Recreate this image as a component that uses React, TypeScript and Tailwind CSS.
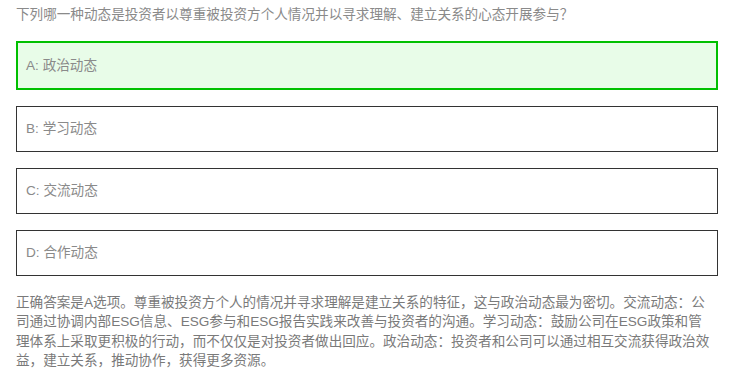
const options = [
  { key: "A", text: "政治动态", correct: true },
  { key: "B", text: "学习动态", correct: false },
  { key: "C", text: "交流动态", correct: false },
  { key: "D", text: "合作动态", correct: false },
];

const font = "font-['Liberation_Sans','Noto_Sans_CJK_SC',sans-serif]";

function Option({ label, text, correct }: { label: string; text: string; correct: boolean }) {
  return (
    <div
      className={
        correct
          ? "flex h-[49px] items-center border-2 border-[#00c000] bg-[#e8fce8] pl-[8px]"
          : "flex h-[46px] items-center border border-[#333333] bg-white pl-[9px]"
      }
    >
      <p className="text-[13.6px] leading-[20px] text-[#8a8a8a]">
        {label}: {text}
      </p>
    </div>
  );
}

export default function App() {
  return (
    <div className={`${font} h-[376px] w-[729px] bg-white pl-4 pr-[11px] pt-[5px]`}>
      <p className="text-[13.6px] leading-[19.5px] text-[#8a8a8a]">
        下列哪一种动态是投资者以尊重被投资方个人情况并以寻求理解、建立关系的心态开展参与？
      </p>
      <div className="mt-[16.5px] flex flex-col gap-[16px]">
        {options.map((o) => (
          <Option key={o.key} label={o.key} text={o.text} correct={o.correct} />
        ))}
      </div>
      <p className="mt-[17px] pr-[4px] text-[13.6px] leading-[19.4px] text-[#7a7a7a]">
        正确答案是A选项。尊重被投资方个人的情况并寻求理解是建立关系的特征，这与政治动态最为密切。交流动态：公司通过协调内部ESG信息、ESG参与和ESG报告实践来改善与投资者的沟通。学习动态：鼓励公司在ESG政策和管理体系上采取更积极的行动，而不仅仅是对投资者做出回应。政治动态：投资者和公司可以通过相互交流获得政治效益，建立关系，推动协作，获得更多资源。
      </p>
    </div>
  );
}
